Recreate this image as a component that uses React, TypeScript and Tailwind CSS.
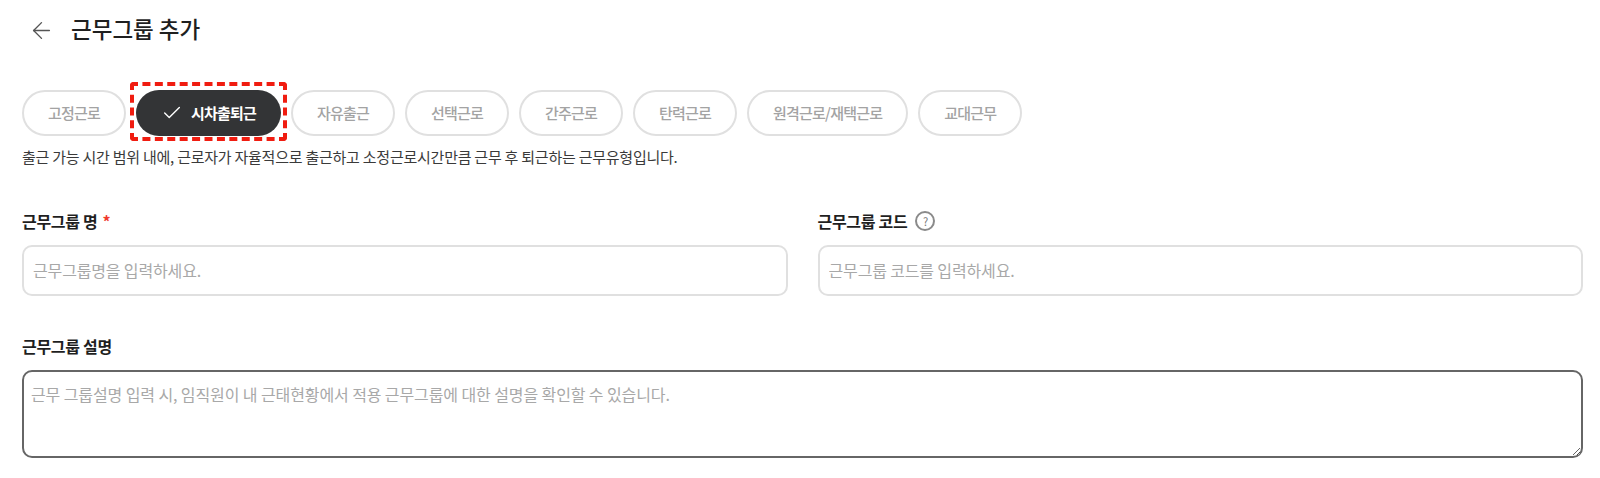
import { ArrowLeft, Check } from "lucide-react";

const TYPES = ["고정근로", "시차출퇴근", "자유출근", "선택근로", "간주근로", "탄력근로", "원격근로/재택근로", "교대근무"];

const ACTIVE = "시차출퇴근";

function TypePill({ label }: { label: string }) {
  if (label === ACTIVE) {
    return (
      <div className="relative">
        <button className="flex h-[46px] w-[145px] items-center justify-center gap-[8px] rounded-full bg-[#333436] text-[15px] font-bold tracking-[-0.8px] text-white">
          <Check size={22} strokeWidth={1.5} />
          {label}
        </button>
        <div className="pointer-events-none absolute -left-[6px] -right-[6px] -top-[8px] -bottom-[5px] rounded-[4px] border-4 border-dashed border-[#f01c10]" />
      </div>
    );
  }

  return (
    <button className="flex h-[46px] items-center justify-center rounded-full border-2 border-[#e0e0e0] bg-white px-[24px] text-[15px] font-medium tracking-[-0.8px] text-[#a3a3a3]">
      {label}
    </button>
  );
}

export default function App() {
  return (
    <div className="h-[478px] overflow-hidden bg-white pl-[22px] pr-[17px] pt-[10px] font-['Noto_Sans_CJK_KR',sans-serif] text-[#1f1f1f]">
      <div className="flex h-[36px] items-center gap-[16px] pl-[6px]">
        <ArrowLeft size={27} strokeWidth={1.25} className="mt-[4px] text-[#555555]" />
        <h1 className="text-[22.5px] font-medium leading-none">근무그룹 추가</h1>
      </div>

      <div className="mt-[44px] flex gap-[10px]">
        {TYPES.map((t) => (
          <TypePill key={t} label={t} />
        ))}
      </div>
      <p className="mt-[9px] text-[15px] leading-[24px] tracking-[-0.24px] text-[#3a3a3a]">
        출근 가능 시간 범위 내에, 근로자가 자율적으로 출근하고 소정근로시간만큼 근무 후 퇴근하는 근무유형입니다.
      </p>

      <div className="mt-[39px] grid grid-cols-2 gap-[30px]">
        <div>
          <label className="flex h-[26px] items-center text-[16px] font-bold tracking-[-0.3px]">
            근무그룹 명<span className="ml-[5px] text-[#f03a2e]">*</span>
          </label>
          <input
            placeholder="근무그룹명을 입력하세요."
            className="mt-[11px] h-[51px] w-full rounded-[10px] border-2 border-[#e0e0e0] px-[9px] pb-[2px] text-[16px] tracking-[-0.15px] placeholder:text-[#a8a8a8] focus:outline-none"
          />
        </div>
        <div>
          <label className="flex h-[26px] items-center text-[16px] font-bold tracking-[-0.3px]">
            근무그룹 코드
            <span className="ml-[8px] flex h-[20px] w-[20px] items-center justify-center rounded-full border-2 border-[#8a8a8a] text-[11px] font-normal text-[#777777]">
              ?
            </span>
          </label>
          <input
            placeholder="근무그룹 코드를 입력하세요."
            className="mt-[11px] h-[51px] w-full rounded-[10px] border-2 border-[#e0e0e0] px-[9px] pb-[2px] text-[16px] tracking-[-0.15px] placeholder:text-[#a8a8a8] focus:outline-none"
          />
        </div>
      </div>

      <div className="mt-[37px]">
        <label className="flex h-[26px] items-center text-[16px] font-bold tracking-[-0.3px]">근무그룹 설명</label>
        <textarea
          placeholder="근무 그룹설명 입력 시, 임직원이 내 근태현황에서 적용 근무그룹에 대한 설명을 확인할 수 있습니다."
          className="mt-[11px] block h-[88px] w-full rounded-[10px] border-2 border-[#666666] px-[7px] py-[10px] text-[16px] tracking-[-0.1px] placeholder:text-[#a8a8a8] focus:outline-none"
        />
      </div>
    </div>
  );
}
